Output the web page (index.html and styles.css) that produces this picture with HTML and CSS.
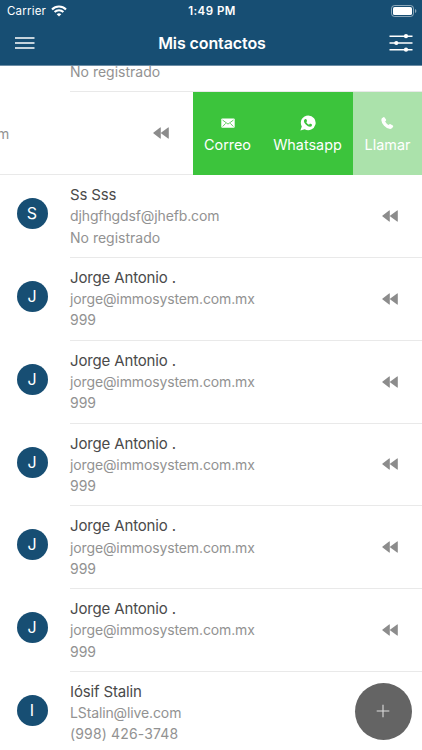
FILE: index.html
```html
<!DOCTYPE html>
<html lang="es">
<head>
    <meta charset="UTF-8">
    <meta name="viewport" content="width=device-width, initial-scale=1.0">
    <title>Mis contactos</title>
    <link rel="stylesheet" href="styles.css">
</head>
<body>

    <!-- Icons used in every row -->
    <svg class="sprite" width="0" height="0">
        <symbol id="rewind" viewBox="0 0 16 12">
            <path d="M7.8 .9v10.2q0 .8-.7.4L.6 6.6q-.7-.6 0-1.2L7.1.5q.7-.4.7.4zM15.8.9v10.2q0 .8-.7.4L8.3 6.6q-.7-.6 0-1.2L15.1.5q.7-.4.7.4z"/>
        </symbol>
    </svg>

    <header class="header">
        <div class="status-bar">
            <div class="carrier">
                <span>Carrier</span>
                <svg width="16" height="12" viewBox="0 0 16 12" fill="none" stroke="#fff" stroke-width="2.1">
                    <path d="M1 4.4a10 10 0 0 1 14 0M3.6 7.1a6.2 6.2 0 0 1 8.8 0"/>
                    <path d="M8 11.6L5.7 9.3a3.3 3.3 0 0 1 4.6 0z" fill="#fff" stroke="none"/>
                </svg>
            </div>
            <span class="time">1:49 PM</span>
            <svg class="battery" width="26" height="12" viewBox="0 0 26 12">
                <rect x=".5" y=".5" width="22" height="11" rx="3" fill="none" stroke="#fff" stroke-opacity=".5"/>
                <rect x="2" y="2" width="19" height="8" rx="1.6" fill="#fff"/>
                <path d="M24 4v4q1.4-.6 1.4-2T24 4z" fill="#fff" fill-opacity=".5"/>
            </svg>
        </div>
        <div class="nav-bar">
            <svg width="20" height="12" viewBox="0 0 20 12" stroke="#fff" stroke-width="1.5">
                <path d="M0 1h19.5M0 6h19.5M0 11h19.5"/>
            </svg>
            <h1>Mis contactos</h1>
            <svg width="24" height="18" viewBox="0 0 24 18" stroke="#fff" stroke-width="1.5" fill="#fff">
                <path d="M.5 2.2h23M.5 9h23M.5 15.700h23"/>
                <g stroke="none">
                    <circle cx="17" cy="2.2" r="2.1"/>
                    <circle cx="7.3" cy="9" r="2.1"/>
                    <circle cx="17" cy="15.7" r="2.1"/>
                </g>
            </svg>
        </div>
    </header>

    <main class="contacts">
        <div class="contact partial">
            <div class="info">
                <div class="text"><p>No registrado</p></div>
            </div>
        </div>

        <!-- Row swiped open -->
        <div class="contact open">
            <div class="info">
                <div class="text"><p>m</p></div>
                <svg class="rewind"><use href="#rewind"/></svg>
            </div>
            <div class="actions">
                <div class="action mail">
                    <svg width="14" height="16" viewBox="0 0 14 16">
                        <rect x=".3" y="3.4" width="13.4" height="9.4" rx="1" fill="#fff"/>
                        <path d="M1.5 5l5.5 4.1L12.5 5M1.7 11.5l3-3.2M12.3 11.5l-3-3.2" fill="none" stroke="#3cc43c" stroke-width=".8"/>
                    </svg>
                    <span>Correo</span>
                </div>
                <div class="action whatsapp">
                    <svg width="16" height="16" viewBox="0 0 16 16">
                        <path d="M8.2.4a7.4 7.4 0 1 1-3.5 13.9L.4 15.6l1.4-4.1A7.4 7.4 0 0 1 8.2.4z" fill="#fff"/>
                        <path d="M5.4 4.1h.8l.9 2-.8 1.1q.9 1.7 2.7 2.5l1-1.1 2 1v.7q-.4 1.5-2 1.5-2 0-4.2-2.2-1.900-2-1.900-3.700 0-1.200 1.500-1.800z" fill="#3cc43c"/>
                    </svg>
                    <span>Whatsapp</span>
                </div>
                <div class="action call">
                    <svg width="14" height="16" viewBox="0 0 14 16">
                        <path d="M2.4 2.2q.7-.4 1.200.3l1.400 2.100q.4.600-.1 1.200l-.8.8q1.300 2.300 3.500 3.500l.8-.8q.6-.5 1.200-.1l2.200 1.400q.7.500.3 1.200-.9 2.200-3 2.100-3.200-.2-6-3.200Q.4 7.700.3 4.900.3 3 2.400 2.200z" fill="#fff"/>
                    </svg>
                    <span>Llamar</span>
                </div>
            </div>
        </div>

        <div class="contact">
            <div class="avatar">S</div>
            <div class="info">
                <div class="text"><h2>Ss Sss</h2><p class="email">djhgfhgdsf@jhefb.com</p><p>No registrado</p></div>
                <svg class="rewind"><use href="#rewind"/></svg>
            </div>
        </div>
        <div class="contact">
            <div class="avatar">J</div>
            <div class="info">
                <div class="text"><h2>Jorge Antonio .</h2><p class="email">jorge@immosystem.com.mx</p><p>999</p></div>
                <svg class="rewind"><use href="#rewind"/></svg>
            </div>
        </div>
        <div class="contact">
            <div class="avatar">J</div>
            <div class="info">
                <div class="text"><h2>Jorge Antonio .</h2><p class="email">jorge@immosystem.com.mx</p><p>999</p></div>
                <svg class="rewind"><use href="#rewind"/></svg>
            </div>
        </div>
        <div class="contact">
            <div class="avatar">J</div>
            <div class="info">
                <div class="text"><h2>Jorge Antonio .</h2><p class="email">jorge@immosystem.com.mx</p><p>999</p></div>
                <svg class="rewind"><use href="#rewind"/></svg>
            </div>
        </div>
        <div class="contact">
            <div class="avatar">J</div>
            <div class="info">
                <div class="text"><h2>Jorge Antonio .</h2><p class="email">jorge@immosystem.com.mx</p><p>999</p></div>
                <svg class="rewind"><use href="#rewind"/></svg>
            </div>
        </div>
        <div class="contact">
            <div class="avatar">J</div>
            <div class="info">
                <div class="text"><h2>Jorge Antonio .</h2><p class="email">jorge@immosystem.com.mx</p><p>999</p></div>
                <svg class="rewind"><use href="#rewind"/></svg>
            </div>
        </div>
        <div class="contact">
            <div class="avatar">I</div>
            <div class="info">
                <div class="text"><h2>Iósif Stalin</h2><p class="email">LStalin@live.com</p><p class="phone">(998) 426-3748</p></div>
            </div>
        </div>
    </main>

    <button class="add" type="button" aria-label="Agregar contacto">
        <svg width="14" height="14" viewBox="0 0 14 14" stroke="#ddd" stroke-width="1.1">
            <path d="M7 .7v12.6M.7 7h12.6"/>
        </svg>
    </button>

</body>
</html>
```
FILE: styles.css
```css
* {
    box-sizing: border-box;
}

body {
    margin: 0;
    height: 750px;
    display: flex;
    flex-direction: column;
    overflow: hidden;
    background: #fff;
    font-family: Inter, "Liberation Sans", sans-serif;
}

h1, h2, p {
    margin: 0;
}

.sprite {
    position: absolute;
}

/* Header */
.header {
    flex: none;
    height: 66px;
    background: #174e73;
    border-bottom: 1px solid #6c8da5;
    color: #fff;
}

.status-bar {
    display: grid;
    grid-template-columns: 1fr auto 1fr;
    align-items: center;
    height: 21px;
    padding: 0 5px 0 7px;
    font-size: 11.5px;
}

.carrier {
    display: flex;
    align-items: center;
    gap: 5px;
    letter-spacing: .2px;
}

.time {
    font-weight: 600;
    letter-spacing: .45px;
}

.battery {
    justify-self: end;
}

.nav-bar {
    display: flex;
    align-items: center;
    justify-content: space-between;
    height: 43px;
    padding: 0 9px 0 15px;
}

.nav-bar h1 {
    font-size: 16px;
    font-weight: 600;
    letter-spacing: -.1px;
}

/* Contact list */
.contacts {
    flex: 1;
    overflow: hidden;
}

.contact {
    display: flex;
    height: 82.8px;
}

.partial {
    height: 26.4px;
    padding-left: 70px;
}

.partial .text {
    margin-top: -14px;
}

.avatar {
    flex: none;
    width: 31px;
    height: 31px;
    margin: 23px 22.5px 0 16.5px;
    border-radius: 50%;
    background: #174e73;
    color: #fff;
    font-size: 16px;
    line-height: 31px;
    text-align: center;
}

.info {
    flex: 1;
    display: flex;
    align-items: center;
    justify-content: space-between;
    padding-right: 24px;
    border-bottom: 1px solid #e9e9e9;
}

.text {
    line-height: 21.2px;
}

.text h2 {
    color: #4a4a4a;
    font-size: 15px;
    font-weight: 400;
    letter-spacing: -.15px;
}

.text p {
    color: #929292;
    font-size: 14px;
}

.text .email {
    letter-spacing: -.12px;
}

.text .phone {
    letter-spacing: .15px;
}

.rewind {
    width: 16px;
    height: 12px;
    fill: #8c8c8c;
}

/* Swipe actions */
.open .text {
    margin-left: -3px;
}

.actions {
    display: flex;
    width: 229px;
    color: #fff;
    font-size: 14.4px;
}

.action {
    display: flex;
    flex-direction: column;
    align-items: center;
    gap: 4px;
    padding-top: 22.5px;
    background: #3cc43c;
}

.action span {
    line-height: 20px;
}

.mail {
    width: 69px;
}

.whatsapp {
    width: 91px;
}

.call {
    width: 69px;
    background: #abe2ab;
}

.add {
    position: absolute;
    right: 10.5px;
    bottom: 10.5px;
    display: flex;
    align-items: center;
    justify-content: center;
    width: 57px;
    height: 57px;
    border: none;
    border-radius: 50%;
    background: #646464;
}
```
